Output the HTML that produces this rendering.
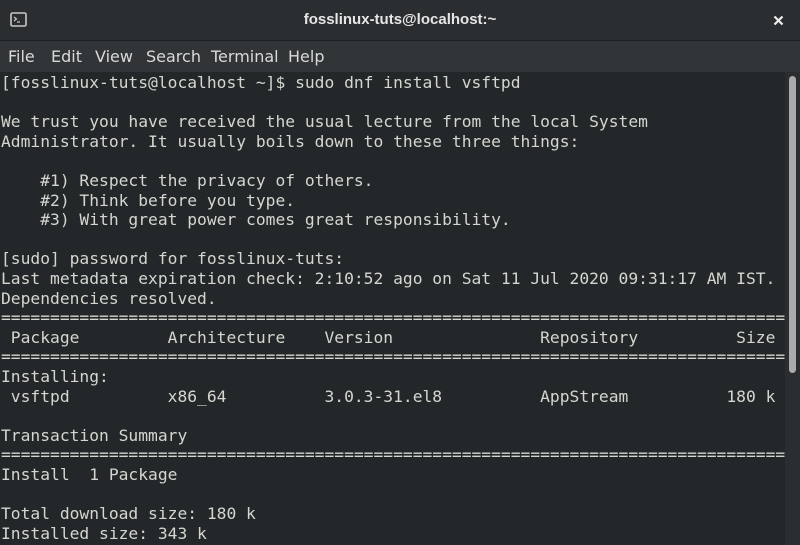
<!DOCTYPE html>
<html><head><meta charset="utf-8"><style>
html,body{margin:0;padding:0;width:800px;height:545px;overflow:hidden;background:#232729;}
.title{position:absolute;left:0;top:0;width:800px;height:40px;background:#2b2e30;border-bottom:1px solid #1c1e1f;}
.title .t{position:absolute;left:0;width:800px;top:11px;text-align:center;color:#e6e6e6;font:bold 15px "Liberation Sans",sans-serif;}
.menu{position:absolute;left:0;top:41px;width:800px;height:31px;background:#313537;font:16px "DejaVu Sans","Liberation Sans",sans-serif;color:#d8dad8;}
.menu span{position:absolute;top:6px;}
pre{position:absolute;left:1px;top:73px;margin:0;font:16.3px/19.6px "DejaVu Sans Mono","Liberation Mono",monospace;color:#d3d7cf;}
.track{position:absolute;left:785px;top:72px;width:15px;height:473px;background:#2a2e30;}
.thumb{position:absolute;left:789px;top:76px;width:7px;height:297px;background:#a9abac;border-radius:4px;}
</style></head><body>
<div class="title">
<svg style="position:absolute;left:10px;top:12px" width="17" height="15" viewBox="0 0 17 15"><rect x="1" y="1" width="15" height="13" rx="1.5" fill="none" stroke="#c8c8c8" stroke-width="1.6"/><path d="M4 5 L6.5 7 L4 9" stroke="#c8c8c8" fill="none" stroke-width="1.2"/><path d="M7 10 H10" stroke="#c8c8c8" stroke-width="1.2"/></svg>
<div class="t">fosslinux-tuts@localhost:~</div>
<svg style="position:absolute;left:773px;top:15px" width="11" height="11" viewBox="0 0 11 11"><path d="M1.5 1.5 L9.5 9.5 M9.5 1.5 L1.5 9.5" stroke="#eee" stroke-width="2.2"/></svg>
</div>
<div class="menu"><span style="left:8px">File</span><span style="left:51px">Edit</span><span style="left:95px">View</span><span style="left:146px">Search</span><span style="left:211px">Terminal</span><span style="left:288px">Help</span></div>
<pre>[fosslinux-tuts@localhost ~]$ sudo dnf install vsftpd

We trust you have received the usual lecture from the local System
Administrator. It usually boils down to these three things:

    #1) Respect the privacy of others.
    #2) Think before you type.
    #3) With great power comes great responsibility.

[sudo] password for fosslinux-tuts:
Last metadata expiration check: 2:10:52 ago on Sat 11 Jul 2020 09:31:17 AM IST.
Dependencies resolved.
================================================================================
 Package         Architecture    Version               Repository          Size
================================================================================
Installing:
 vsftpd          x86_64          3.0.3-31.el8          AppStream          180 k

Transaction Summary
================================================================================
Install  1 Package

Total download size: 180 k
Installed size: 343 k</pre>
<div class="track"></div><div class="thumb"></div>
</body></html>
